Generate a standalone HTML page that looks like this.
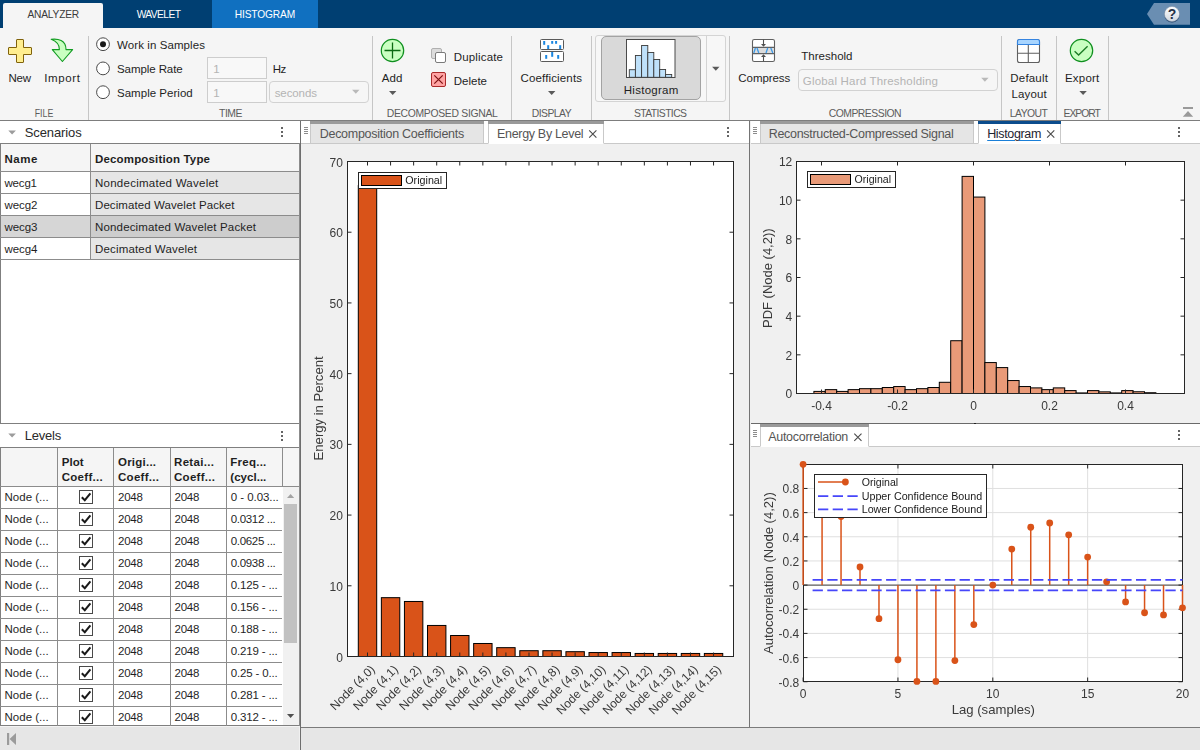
<!DOCTYPE html>
<html><head><meta charset="utf-8"><title>Wavelet Signal Analyzer</title><style>
html,body{margin:0;padding:0;}
body{width:1200px;height:750px;position:relative;overflow:hidden;background:#f0f0f0;font-family:"Liberation Sans",sans-serif;}
.t{position:absolute;line-height:1;white-space:nowrap;}
.a{position:absolute;box-sizing:border-box;}
svg{position:absolute;left:0;top:0;overflow:visible;}
svg text{font-family:"Liberation Sans",sans-serif;}
</style></head>
<body>
<div class="a" id="tabbar" style="left:0;top:0;width:1200px;height:28px;background:#003f72;"></div>
<div class="a" style="left:3px;top:3px;width:100px;height:26px;background:#f5f5f5;border-radius:2px 2px 0 0;"></div>
<div class="a" style="left:212px;top:0;width:106px;height:28px;background:#1070c0;"></div>
<span class="t" style="left:27.50px;top:10.00px;font-size:10.2px;color:#3a3a3a;letter-spacing:-0.199px;">ANALYZER</span>
<span class="t" style="left:136.70px;top:10.00px;font-size:10.2px;color:#ffffff;letter-spacing:-0.552px;">WAVELET</span>
<span class="t" style="left:234.70px;top:10.00px;font-size:10.2px;color:#ffffff;letter-spacing:-0.123px;">HISTOGRAM</span>
<svg width="1200" height="28" viewBox="0 0 1200 28"><path d="M1147 14 L1154 3 H1190 V24.8 H1154 Z" fill="#6a8eb2"/><defs><linearGradient id="hg" x1="0" y1="0" x2="0" y2="1"><stop offset="0" stop-color="#ffffff"/><stop offset="1" stop-color="#cfd6de"/></linearGradient></defs><circle cx="1172" cy="14.7" r="7.7" fill="#1f4068"/><circle cx="1172" cy="14" r="7.6" fill="url(#hg)" stroke="#8a9bb0" stroke-width="0.6"/><text x="1172" y="18.5" font-size="14" font-weight="bold" text-anchor="middle" fill="#273248">?</text></svg>
<div class="a" id="toolstrip" style="left:0;top:28px;width:1200px;height:92px;background:#f5f5f5;"></div>
<div class="a" style="left:0;top:120px;width:1200px;height:1px;background:#7d7d7d;"></div>
<div class="a" style="left:88px;top:36px;width:1px;height:84px;background:#c6c6c6;"></div>
<div class="a" style="left:372px;top:36px;width:1px;height:84px;background:#c6c6c6;"></div>
<div class="a" style="left:511px;top:36px;width:1px;height:84px;background:#c6c6c6;"></div>
<div class="a" style="left:591px;top:36px;width:1px;height:84px;background:#c6c6c6;"></div>
<div class="a" style="left:729px;top:36px;width:1px;height:84px;background:#c6c6c6;"></div>
<div class="a" style="left:1001px;top:36px;width:1px;height:84px;background:#c6c6c6;"></div>
<div class="a" style="left:1056px;top:36px;width:1px;height:84px;background:#c6c6c6;"></div>
<div class="a" style="left:1108px;top:36px;width:1px;height:84px;background:#c6c6c6;"></div>
<span class="t" style="left:219.00px;top:109.00px;font-size:10.4px;color:#5c5c5c;letter-spacing:-0.448px;">TIME</span>
<span class="t" style="left:386.70px;top:109.00px;font-size:10.4px;color:#5c5c5c;letter-spacing:-0.304px;">DECOMPOSED SIGNAL</span>
<span class="t" style="left:531.70px;top:109.00px;font-size:10.4px;color:#5c5c5c;letter-spacing:-0.527px;">DISPLAY</span>
<span class="t" style="left:634.00px;top:109.00px;font-size:10.4px;color:#5c5c5c;letter-spacing:-0.617px;">STATISTICS</span>
<span class="t" style="left:828.70px;top:109.00px;font-size:10.4px;color:#5c5c5c;letter-spacing:-0.501px;">COMPRESSION</span>
<span class="t" style="left:1009.80px;top:109.00px;font-size:10.4px;color:#5c5c5c;letter-spacing:-0.548px;">LAYOUT</span>
<span class="t" style="left:1063.50px;top:109.00px;font-size:10.4px;color:#5c5c5c;letter-spacing:-1.055px;">EXPORT</span>
<div class="a" style="left:595px;top:34.5px;width:131px;height:67.5px;border:1px solid #d4d4d4;border-radius:3px;background:#f7f7f7;"></div>
<div class="a" style="left:706px;top:35px;width:1px;height:66px;background:#d4d4d4;"></div>
<div class="a" style="left:601px;top:36.3px;width:100px;height:63.5px;border:1px solid #a3a3a3;border-radius:5px;background:#d9d9d9;"></div>
<span class="t" style="left:8.50px;top:73.00px;font-size:11.5px;color:#1f1f1f;letter-spacing:-0.253px;">New</span>
<span class="t" style="left:44.20px;top:73.00px;font-size:11.5px;color:#1f1f1f;letter-spacing:0.642px;">Import</span>
<span class="t" style="left:117.00px;top:40.00px;font-size:11.5px;color:#1f1f1f;letter-spacing:0.092px;">Work in Samples</span>
<span class="t" style="left:117.00px;top:64.00px;font-size:11.5px;color:#1f1f1f;letter-spacing:-0.078px;">Sample Rate</span>
<span class="t" style="left:117.00px;top:88.00px;font-size:11.5px;color:#1f1f1f;letter-spacing:0.022px;">Sample Period</span>
<span class="t" style="left:272.80px;top:64.00px;font-size:11.5px;color:#1f1f1f;letter-spacing:-0.555px;">Hz</span>
<span class="t" style="left:381.70px;top:73.00px;font-size:11.5px;color:#1f1f1f;letter-spacing:0.169px;">Add</span>
<span class="t" style="left:453.80px;top:52.00px;font-size:11.5px;color:#1f1f1f;letter-spacing:0.157px;">Duplicate</span>
<span class="t" style="left:453.80px;top:76.00px;font-size:11.5px;color:#1f1f1f;letter-spacing:-0.009px;">Delete</span>
<span class="t" style="left:520.50px;top:73.00px;font-size:11.5px;color:#1f1f1f;letter-spacing:0.148px;">Coefficients</span>
<span class="t" style="left:623.80px;top:85.00px;font-size:11.5px;color:#1f1f1f;letter-spacing:0.262px;">Histogram</span>
<span class="t" style="left:738.30px;top:73.00px;font-size:11.5px;color:#1f1f1f;letter-spacing:-0.058px;">Compress</span>
<span class="t" style="left:801.30px;top:51.00px;font-size:11.5px;color:#1f1f1f;letter-spacing:0.008px;">Threshold</span>
<span class="t" style="left:1010.30px;top:73.00px;font-size:11.5px;color:#1f1f1f;letter-spacing:0.194px;">Default</span>
<span class="t" style="left:1011.50px;top:89.00px;font-size:11.5px;color:#1f1f1f;letter-spacing:0.134px;">Layout</span>
<span class="t" style="left:1065.00px;top:73.00px;font-size:11.5px;color:#1f1f1f;letter-spacing:0.192px;">Export</span>
<div class="a" style="left:207px;top:57px;width:60px;height:21.5px;border:1px solid #cdcdcd;background:#f8f8f8;"></div>
<div class="a" style="left:207px;top:81px;width:60px;height:21.5px;border:1px solid #cdcdcd;background:#f8f8f8;"></div>
<span class="t" style="left:213.30px;top:64.00px;font-size:11.5px;color:#b4b4b4;">1</span>
<span class="t" style="left:213.30px;top:88.00px;font-size:11.5px;color:#b4b4b4;">1</span>
<div class="a" style="left:269px;top:81px;width:100px;height:21.5px;border:1px solid #d2d2d2;border-radius:4px;background:#f6f6f6;"></div>
<span class="t" style="left:274.70px;top:88.00px;font-size:11.5px;color:#b4b4b4;letter-spacing:-0.089px;">seconds</span>
<div class="a" style="left:798px;top:69px;width:200px;height:21.5px;border:1px solid #d2d2d2;border-radius:4px;background:#f6f6f6;"></div>
<span class="t" style="left:802.80px;top:76.00px;font-size:11.5px;color:#b4b4b4;letter-spacing:0.190px;">Global Hard Thresholding</span>
<svg width="1200" height="121" viewBox="0 0 1200 121"><defs><linearGradient id="gy" x1="0" y1="0" x2="0" y2="1"><stop offset="0" stop-color="#fdf29c"/><stop offset="1" stop-color="#f4d951"/></linearGradient><linearGradient id="gg" x1="0" y1="0" x2="0" y2="1"><stop offset="0" stop-color="#d9fbc8"/><stop offset="1" stop-color="#a9ec92"/></linearGradient></defs><circle cx="103" cy="44.2" r="6.4" fill="#ffffff" stroke="#4a4a4a" stroke-width="1"/><circle cx="103" cy="44.2" r="3" fill="#1a1a1a"/><circle cx="103" cy="68.4" r="6.4" fill="#ffffff" stroke="#4a4a4a" stroke-width="1"/><circle cx="103" cy="92.2" r="6.4" fill="#ffffff" stroke="#4a4a4a" stroke-width="1"/><path d="M17 39.5 H23 Q23.5 39.5 23.5 40 V47.5 H31 Q31.5 47.5 31.5 48 V54 Q31.5 54.5 31 54.5 H23.5 V62 Q23.5 62.5 23 62.5 H17 Q16.5 62.5 16.5 62 V54.5 H9 Q8.5 54.5 8.5 54 V48 Q8.5 47.5 9 47.5 H16.5 V40 Q16.5 39.5 17 39.5 Z" fill="#ffee8f" stroke="#80620c" stroke-width="1"/><path d="M51.2 39.3 C58 38.4 66 40.2 66 49.6 H72.6 L62.4 61.5 L52.3 49.6 H59.4 C59.6 45.2 57 41.6 51.2 39.3 Z" fill="#c9ffc1" stroke="#119c21" stroke-width="1.1" stroke-linejoin="round"/><circle cx="392.5" cy="50.5" r="11.2" fill="#c9ffc1" stroke="#0f8f1f" stroke-width="1.2"/><path d="M392.5 42.5 V58.5 M384.5 50.5 H400.5" stroke="#0b6a12" stroke-width="1.3" fill="none"/><path d="M389.0 91.0 H396.4 L392.7 95.0 Z" fill="#5a5a5a"/><path d="M548.0 91.0 H555.4000000000001 L551.7 95.0 Z" fill="#5a5a5a"/><path d="M1079.3999999999999 91.0 H1086.8 L1083.1 95.0 Z" fill="#5a5a5a"/><path d="M712.0999999999999 66.8 H719.5 L715.8 70.8 Z" fill="#5a5a5a"/><path d="M352.1 89.8 H359.5 L355.8 93.8 Z" fill="#b9b9b9"/><path d="M981.1999999999999 77.8 H988.6 L984.9 81.8 Z" fill="#b9b9b9"/><rect x="431.5" y="48.5" width="10" height="10" rx="1.5" fill="#dcdcdc" stroke="#b0b0b0" stroke-width="1"/><rect x="435.5" y="52.5" width="10" height="10" rx="1.5" fill="#ffffff" stroke="#7a7a7a" stroke-width="1"/><rect x="431.5" y="72.5" width="14" height="14" rx="1.5" fill="#ffa3a3" stroke="#a82a2a" stroke-width="1"/><path d="M434.3 75.3 L442.7 83.7 M442.7 75.3 L434.3 83.7" stroke="#7c1010" stroke-width="1.2" fill="none"/><rect x="540.5" y="39.5" width="23" height="10" rx="1" fill="#ffffff" stroke="#5a5a5a" stroke-width="1"/><rect x="540.5" y="51.5" width="23" height="10" rx="1" fill="#ffffff" stroke="#5a5a5a" stroke-width="1"/><rect x="543.2" y="41" width="2" height="3.8" fill="#1a86e0"/><rect x="547.2" y="45.2" width="2" height="3.8" fill="#1a86e0"/><rect x="551.2" y="41" width="2" height="2.8" fill="#1a86e0"/><rect x="555.1" y="41" width="2" height="2.8" fill="#1a86e0"/><rect x="559.2" y="45.2" width="2" height="3.8" fill="#1a86e0"/><rect x="545.2" y="55" width="2" height="3.8" fill="#1a86e0"/><rect x="551.2" y="52" width="2" height="4.8" fill="#1a86e0"/><rect x="557.2" y="55" width="2" height="3.8" fill="#1a86e0"/><rect x="626.5" y="39.5" width="48.5" height="38" fill="#ffffff" stroke="#4a4a4a" stroke-width="1"/><rect x="629.3" y="69.7" width="6.10" height="7.60" fill="#bfe1fa" stroke="#3a3a3a" stroke-width="0.9"/><rect x="635.4" y="55.5" width="6.20" height="21.80" fill="#bfe1fa" stroke="#3a3a3a" stroke-width="0.9"/><rect x="641.6" y="45.5" width="6.20" height="31.80" fill="#bfe1fa" stroke="#3a3a3a" stroke-width="0.9"/><rect x="647.8" y="52.5" width="6.00" height="24.80" fill="#bfe1fa" stroke="#3a3a3a" stroke-width="0.9"/><rect x="653.8" y="59.5" width="5.90" height="17.80" fill="#bfe1fa" stroke="#3a3a3a" stroke-width="0.9"/><rect x="659.7" y="69.5" width="5.90" height="7.80" fill="#bfe1fa" stroke="#3a3a3a" stroke-width="0.9"/><rect x="665.6" y="74.5" width="6.10" height="2.80" fill="#bfe1fa" stroke="#3a3a3a" stroke-width="0.9"/><rect x="752.5" y="39.5" width="22" height="22" rx="1.8" fill="#ffffff" stroke="#606060" stroke-width="1.1"/><rect x="753" y="47.5" width="21" height="6" fill="#dcdcdc"/><path d="M752.5 47.4 H774.5 M752.5 53.6 H774.5" stroke="#606060" stroke-width="1.1" fill="none"/><path d="M753.8 53 L755.4 48 M757 48 L758.8 53 M766 53 L767.7 48 M770.8 48 L772.8 53" stroke="#3d9be9" stroke-width="1.3" fill="none"/><path d="M763.5 39.5 V45 M763.5 61.5 V56" stroke="#505050" stroke-width="1.1" fill="none"/><path d="M761 44 H766 L763.5 46.8 Z M761 57 H766 L763.5 54.2 Z" fill="#505050"/><rect x="1017.5" y="39.5" width="22" height="23" rx="2" fill="#ffffff" stroke="#606060" stroke-width="1.1"/><path d="M1017.5 44.5 V41.5 Q1017.5 39.5 1019.5 39.5 H1037.5 Q1039.5 39.5 1039.5 41.5 V44.5 Z" fill="#a8d5ff" stroke="#3584e0" stroke-width="1.1"/><path d="M1018 53.3 H1039 M1028.3 45 V62.5" stroke="#606060" stroke-width="1.1" fill="none"/><circle cx="1081.5" cy="50.5" r="11.2" fill="#c9ffc1" stroke="#0f8f1f" stroke-width="1.2"/><path d="M1074.6 51.2 L1078.6 55 L1087.6 46.2" stroke="#1d7d26" stroke-width="1.4" fill="none"/><text x="34.7" y="117" font-size="10.4" textLength="18.6" lengthAdjust="spacingAndGlyphs" fill="#5c5c5c">FILE</text><path d="M1183 107 H1193 V109 H1183 Z M1188 111 L1193.2 116.8 H1182.8 Z" fill="#9a9a9a"/></svg>
<div class="a" id="left" style="left:0;top:121px;width:300px;height:605px;background:#ffffff;"></div>
<svg width="300" height="750" viewBox="0 0 300 750"><path d="M8.3 130.6 H15.9 L12.1 134.4 Z M8.3 433.6 H15.9 L12.1 437.4 Z" fill="#9c9c9c"/></svg>
<span class="t" style="left:24.70px;top:126.00px;font-size:13px;color:#2a2a2a;letter-spacing:-0.101px;">Scenarios</span>
<div class="a" style="left:281px;top:127.0px;width:2px;height:2px;background:#646464;"></div><div class="a" style="left:281px;top:131.0px;width:2px;height:2px;background:#646464;"></div><div class="a" style="left:281px;top:135.0px;width:2px;height:2px;background:#646464;"></div>
<div class="a" style="left:0;top:143px;width:300px;height:281px;border:1px solid #7f7f7f;border-right:none;"></div>
<div class="a" style="left:1px;top:144px;width:298px;height:27px;background:#f5f5f5;"></div>
<div class="a" style="left:1px;top:171.5px;width:90px;height:22px;background:#ffffff;"></div>
<div class="a" style="left:91px;top:171.5px;width:208px;height:22px;background:#e6e6e6;"></div>
<span class="t" style="left:4.50px;top:178.00px;font-size:11.5px;color:#1f1f1f;letter-spacing:-0.186px;">wecg1</span>
<span class="t" style="left:95.00px;top:178.00px;font-size:11.5px;color:#1f1f1f;letter-spacing:0.254px;">Nondecimated Wavelet</span>
<div class="a" style="left:1px;top:193.5px;width:90px;height:22px;background:#ffffff;"></div>
<div class="a" style="left:91px;top:193.5px;width:208px;height:22px;background:#e6e6e6;"></div>
<span class="t" style="left:4.50px;top:200.00px;font-size:11.5px;color:#1f1f1f;letter-spacing:-0.061px;">wecg2</span>
<span class="t" style="left:95.00px;top:200.00px;font-size:11.5px;color:#1f1f1f;letter-spacing:0.081px;">Decimated Wavelet Packet</span>
<div class="a" style="left:1px;top:215.5px;width:90px;height:22px;background:#d6d6d6;"></div>
<div class="a" style="left:91px;top:215.5px;width:208px;height:22px;background:#cdcdcd;"></div>
<span class="t" style="left:4.50px;top:222.00px;font-size:11.5px;color:#1f1f1f;letter-spacing:-0.061px;">wecg3</span>
<span class="t" style="left:95.00px;top:222.00px;font-size:11.5px;color:#1f1f1f;letter-spacing:0.161px;">Nondecimated Wavelet Packet</span>
<div class="a" style="left:1px;top:237.5px;width:90px;height:22px;background:#ffffff;"></div>
<div class="a" style="left:91px;top:237.5px;width:208px;height:22px;background:#e6e6e6;"></div>
<span class="t" style="left:4.50px;top:244.00px;font-size:11.5px;color:#1f1f1f;letter-spacing:-0.061px;">wecg4</span>
<span class="t" style="left:95.00px;top:244.00px;font-size:11.5px;color:#1f1f1f;letter-spacing:0.170px;">Decimated Wavelet</span>
<div class="a" style="left:0;top:171.0px;width:299px;height:1px;background:#8c8c8c;"></div>
<div class="a" style="left:0;top:193.0px;width:299px;height:1px;background:#8c8c8c;"></div>
<div class="a" style="left:0;top:215.0px;width:299px;height:1px;background:#8c8c8c;"></div>
<div class="a" style="left:0;top:237.0px;width:299px;height:1px;background:#8c8c8c;"></div>
<div class="a" style="left:0;top:259.0px;width:299px;height:1px;background:#8c8c8c;"></div>
<div class="a" style="left:90px;top:144px;width:1px;height:116px;background:#8c8c8c;"></div>
<span class="t" style="left:4.50px;top:154.00px;font-size:11.5px;color:#1f1f1f;font-weight:bold;letter-spacing:0.559px;">Name</span>
<span class="t" style="left:95.00px;top:154.00px;font-size:11.5px;color:#1f1f1f;font-weight:bold;letter-spacing:0.162px;">Decomposition Type</span>
<span class="t" style="left:24.70px;top:429.00px;font-size:13px;color:#2a2a2a;letter-spacing:-0.196px;">Levels</span>
<div class="a" style="left:281px;top:431.0px;width:2px;height:2px;background:#646464;"></div><div class="a" style="left:281px;top:435.0px;width:2px;height:2px;background:#646464;"></div><div class="a" style="left:281px;top:439.0px;width:2px;height:2px;background:#646464;"></div>
<div class="a" style="left:0;top:446.5px;width:300px;height:279.5px;border:1px solid #7f7f7f;border-right:none;overflow:hidden;"></div>
<div class="a" style="left:1px;top:447.5px;width:298px;height:39px;background:#f5f5f5;"></div>
<div class="a" style="left:0;top:486px;width:300px;height:239px;overflow:hidden;">
<span class="t" style="left:4.50px;top:6.00px;font-size:11.5px;color:#1f1f1f;letter-spacing:0.012px;">Node (...</span>
<span class="t" style="left:118.00px;top:6.00px;font-size:11.5px;color:#1f1f1f;letter-spacing:-0.261px;">2048</span>
<span class="t" style="left:174.50px;top:6.00px;font-size:11.5px;color:#1f1f1f;letter-spacing:-0.261px;">2048</span>
<span class="t" style="left:230.80px;top:6.00px;font-size:11.5px;color:#1f1f1f;letter-spacing:-0.058px;">0 - 0.03...</span>
<div class="a" style="left:79px;top:4.0px;width:14px;height:14px;border:1px solid #4a4a4a;background:#fff;"></div>
<svg width="14" height="14" viewBox="0 0 14 14" style="left:79px;top:4.0px"><path d="M2.8 7.2 L5.8 10.2 L11.4 3.4" stroke="#1a1a1a" stroke-width="2" fill="none"/></svg>
<div class="a" style="left:0;top:22px;width:282px;height:1px;background:#8c8c8c;"></div>
<span class="t" style="left:4.50px;top:28.00px;font-size:11.5px;color:#1f1f1f;letter-spacing:0.012px;">Node (...</span>
<span class="t" style="left:118.00px;top:28.00px;font-size:11.5px;color:#1f1f1f;letter-spacing:-0.261px;">2048</span>
<span class="t" style="left:174.50px;top:28.00px;font-size:11.5px;color:#1f1f1f;letter-spacing:-0.261px;">2048</span>
<span class="t" style="left:230.80px;top:28.00px;font-size:11.5px;color:#1f1f1f;letter-spacing:-0.328px;">0.0312 ...</span>
<div class="a" style="left:79px;top:26.0px;width:14px;height:14px;border:1px solid #4a4a4a;background:#fff;"></div>
<svg width="14" height="14" viewBox="0 0 14 14" style="left:79px;top:26.0px"><path d="M2.8 7.2 L5.8 10.2 L11.4 3.4" stroke="#1a1a1a" stroke-width="2" fill="none"/></svg>
<div class="a" style="left:0;top:44px;width:282px;height:1px;background:#8c8c8c;"></div>
<span class="t" style="left:4.50px;top:50.00px;font-size:11.5px;color:#1f1f1f;letter-spacing:0.012px;">Node (...</span>
<span class="t" style="left:118.00px;top:50.00px;font-size:11.5px;color:#1f1f1f;letter-spacing:-0.261px;">2048</span>
<span class="t" style="left:174.50px;top:50.00px;font-size:11.5px;color:#1f1f1f;letter-spacing:-0.261px;">2048</span>
<span class="t" style="left:230.80px;top:50.00px;font-size:11.5px;color:#1f1f1f;letter-spacing:-0.328px;">0.0625 ...</span>
<div class="a" style="left:79px;top:48.0px;width:14px;height:14px;border:1px solid #4a4a4a;background:#fff;"></div>
<svg width="14" height="14" viewBox="0 0 14 14" style="left:79px;top:48.0px"><path d="M2.8 7.2 L5.8 10.2 L11.4 3.4" stroke="#1a1a1a" stroke-width="2" fill="none"/></svg>
<div class="a" style="left:0;top:66px;width:282px;height:1px;background:#8c8c8c;"></div>
<span class="t" style="left:4.50px;top:72.00px;font-size:11.5px;color:#1f1f1f;letter-spacing:0.012px;">Node (...</span>
<span class="t" style="left:118.00px;top:72.00px;font-size:11.5px;color:#1f1f1f;letter-spacing:-0.261px;">2048</span>
<span class="t" style="left:174.50px;top:72.00px;font-size:11.5px;color:#1f1f1f;letter-spacing:-0.261px;">2048</span>
<span class="t" style="left:230.80px;top:72.00px;font-size:11.5px;color:#1f1f1f;letter-spacing:-0.328px;">0.0938 ...</span>
<div class="a" style="left:79px;top:70.0px;width:14px;height:14px;border:1px solid #4a4a4a;background:#fff;"></div>
<svg width="14" height="14" viewBox="0 0 14 14" style="left:79px;top:70.0px"><path d="M2.8 7.2 L5.8 10.2 L11.4 3.4" stroke="#1a1a1a" stroke-width="2" fill="none"/></svg>
<div class="a" style="left:0;top:88px;width:282px;height:1px;background:#8c8c8c;"></div>
<span class="t" style="left:4.50px;top:94.00px;font-size:11.5px;color:#1f1f1f;letter-spacing:0.012px;">Node (...</span>
<span class="t" style="left:118.00px;top:94.00px;font-size:11.5px;color:#1f1f1f;letter-spacing:-0.261px;">2048</span>
<span class="t" style="left:174.50px;top:94.00px;font-size:11.5px;color:#1f1f1f;letter-spacing:-0.261px;">2048</span>
<span class="t" style="left:230.80px;top:94.00px;font-size:11.5px;color:#1f1f1f;letter-spacing:-0.158px;">0.125 - ...</span>
<div class="a" style="left:79px;top:92.0px;width:14px;height:14px;border:1px solid #4a4a4a;background:#fff;"></div>
<svg width="14" height="14" viewBox="0 0 14 14" style="left:79px;top:92.0px"><path d="M2.8 7.2 L5.8 10.2 L11.4 3.4" stroke="#1a1a1a" stroke-width="2" fill="none"/></svg>
<div class="a" style="left:0;top:110px;width:282px;height:1px;background:#8c8c8c;"></div>
<span class="t" style="left:4.50px;top:116.00px;font-size:11.5px;color:#1f1f1f;letter-spacing:0.012px;">Node (...</span>
<span class="t" style="left:118.00px;top:116.00px;font-size:11.5px;color:#1f1f1f;letter-spacing:-0.261px;">2048</span>
<span class="t" style="left:174.50px;top:116.00px;font-size:11.5px;color:#1f1f1f;letter-spacing:-0.261px;">2048</span>
<span class="t" style="left:230.80px;top:116.00px;font-size:11.5px;color:#1f1f1f;letter-spacing:-0.158px;">0.156 - ...</span>
<div class="a" style="left:79px;top:114.0px;width:14px;height:14px;border:1px solid #4a4a4a;background:#fff;"></div>
<svg width="14" height="14" viewBox="0 0 14 14" style="left:79px;top:114.0px"><path d="M2.8 7.2 L5.8 10.2 L11.4 3.4" stroke="#1a1a1a" stroke-width="2" fill="none"/></svg>
<div class="a" style="left:0;top:132px;width:282px;height:1px;background:#8c8c8c;"></div>
<span class="t" style="left:4.50px;top:138.00px;font-size:11.5px;color:#1f1f1f;letter-spacing:0.012px;">Node (...</span>
<span class="t" style="left:118.00px;top:138.00px;font-size:11.5px;color:#1f1f1f;letter-spacing:-0.261px;">2048</span>
<span class="t" style="left:174.50px;top:138.00px;font-size:11.5px;color:#1f1f1f;letter-spacing:-0.261px;">2048</span>
<span class="t" style="left:230.80px;top:138.00px;font-size:11.5px;color:#1f1f1f;letter-spacing:-0.158px;">0.188 - ...</span>
<div class="a" style="left:79px;top:136.0px;width:14px;height:14px;border:1px solid #4a4a4a;background:#fff;"></div>
<svg width="14" height="14" viewBox="0 0 14 14" style="left:79px;top:136.0px"><path d="M2.8 7.2 L5.8 10.2 L11.4 3.4" stroke="#1a1a1a" stroke-width="2" fill="none"/></svg>
<div class="a" style="left:0;top:154px;width:282px;height:1px;background:#8c8c8c;"></div>
<span class="t" style="left:4.50px;top:160.00px;font-size:11.5px;color:#1f1f1f;letter-spacing:0.012px;">Node (...</span>
<span class="t" style="left:118.00px;top:160.00px;font-size:11.5px;color:#1f1f1f;letter-spacing:-0.261px;">2048</span>
<span class="t" style="left:174.50px;top:160.00px;font-size:11.5px;color:#1f1f1f;letter-spacing:-0.261px;">2048</span>
<span class="t" style="left:230.80px;top:160.00px;font-size:11.5px;color:#1f1f1f;letter-spacing:-0.158px;">0.219 - ...</span>
<div class="a" style="left:79px;top:158.0px;width:14px;height:14px;border:1px solid #4a4a4a;background:#fff;"></div>
<svg width="14" height="14" viewBox="0 0 14 14" style="left:79px;top:158.0px"><path d="M2.8 7.2 L5.8 10.2 L11.4 3.4" stroke="#1a1a1a" stroke-width="2" fill="none"/></svg>
<div class="a" style="left:0;top:176px;width:282px;height:1px;background:#8c8c8c;"></div>
<span class="t" style="left:4.50px;top:182.00px;font-size:11.5px;color:#1f1f1f;letter-spacing:0.012px;">Node (...</span>
<span class="t" style="left:118.00px;top:182.00px;font-size:11.5px;color:#1f1f1f;letter-spacing:-0.261px;">2048</span>
<span class="t" style="left:174.50px;top:182.00px;font-size:11.5px;color:#1f1f1f;letter-spacing:-0.261px;">2048</span>
<span class="t" style="left:230.80px;top:182.00px;font-size:11.5px;color:#1f1f1f;letter-spacing:-0.158px;">0.25 - 0...</span>
<div class="a" style="left:79px;top:180.0px;width:14px;height:14px;border:1px solid #4a4a4a;background:#fff;"></div>
<svg width="14" height="14" viewBox="0 0 14 14" style="left:79px;top:180.0px"><path d="M2.8 7.2 L5.8 10.2 L11.4 3.4" stroke="#1a1a1a" stroke-width="2" fill="none"/></svg>
<div class="a" style="left:0;top:198px;width:282px;height:1px;background:#8c8c8c;"></div>
<span class="t" style="left:4.50px;top:204.00px;font-size:11.5px;color:#1f1f1f;letter-spacing:0.012px;">Node (...</span>
<span class="t" style="left:118.00px;top:204.00px;font-size:11.5px;color:#1f1f1f;letter-spacing:-0.261px;">2048</span>
<span class="t" style="left:174.50px;top:204.00px;font-size:11.5px;color:#1f1f1f;letter-spacing:-0.261px;">2048</span>
<span class="t" style="left:230.80px;top:204.00px;font-size:11.5px;color:#1f1f1f;letter-spacing:-0.158px;">0.281 - ...</span>
<div class="a" style="left:79px;top:202.0px;width:14px;height:14px;border:1px solid #4a4a4a;background:#fff;"></div>
<svg width="14" height="14" viewBox="0 0 14 14" style="left:79px;top:202.0px"><path d="M2.8 7.2 L5.8 10.2 L11.4 3.4" stroke="#1a1a1a" stroke-width="2" fill="none"/></svg>
<div class="a" style="left:0;top:220px;width:282px;height:1px;background:#8c8c8c;"></div>
<span class="t" style="left:4.50px;top:226.00px;font-size:11.5px;color:#1f1f1f;letter-spacing:0.012px;">Node (...</span>
<span class="t" style="left:118.00px;top:226.00px;font-size:11.5px;color:#1f1f1f;letter-spacing:-0.261px;">2048</span>
<span class="t" style="left:174.50px;top:226.00px;font-size:11.5px;color:#1f1f1f;letter-spacing:-0.261px;">2048</span>
<span class="t" style="left:230.80px;top:226.00px;font-size:11.5px;color:#1f1f1f;letter-spacing:-0.158px;">0.312 - ...</span>
<div class="a" style="left:79px;top:224.0px;width:14px;height:14px;border:1px solid #4a4a4a;background:#fff;"></div>
<svg width="14" height="14" viewBox="0 0 14 14" style="left:79px;top:224.0px"><path d="M2.8 7.2 L5.8 10.2 L11.4 3.4" stroke="#1a1a1a" stroke-width="2" fill="none"/></svg>
</div>
<div class="a" style="left:0;top:486px;width:299px;height:1px;background:#8c8c8c;"></div>
<div class="a" style="left:57px;top:447.5px;width:1px;height:278px;background:#8c8c8c;"></div>
<div class="a" style="left:113px;top:447.5px;width:1px;height:278px;background:#8c8c8c;"></div>
<div class="a" style="left:170px;top:447.5px;width:1px;height:278px;background:#8c8c8c;"></div>
<div class="a" style="left:226px;top:447.5px;width:1px;height:278px;background:#8c8c8c;"></div>
<div class="a" style="left:282px;top:447.5px;width:1px;height:39px;background:#8c8c8c;"></div>
<span class="t" style="left:61.70px;top:457.00px;font-size:11.5px;color:#1f1f1f;font-weight:bold;letter-spacing:0.093px;">Plot</span>
<span class="t" style="left:61.70px;top:472.00px;font-size:11.5px;color:#1f1f1f;font-weight:bold;letter-spacing:0.290px;">Coeff...</span>
<span class="t" style="left:118.00px;top:457.00px;font-size:11.5px;color:#1f1f1f;font-weight:bold;letter-spacing:0.226px;">Origi...</span>
<span class="t" style="left:118.00px;top:472.00px;font-size:11.5px;color:#1f1f1f;font-weight:bold;letter-spacing:0.290px;">Coeff...</span>
<span class="t" style="left:174.00px;top:457.00px;font-size:11.5px;color:#1f1f1f;font-weight:bold;letter-spacing:0.328px;">Retai...</span>
<span class="t" style="left:174.00px;top:472.00px;font-size:11.5px;color:#1f1f1f;font-weight:bold;letter-spacing:0.290px;">Coeff...</span>
<span class="t" style="left:230.30px;top:457.00px;font-size:11.5px;color:#1f1f1f;font-weight:bold;letter-spacing:0.249px;">Freq...</span>
<span class="t" style="left:230.30px;top:472.00px;font-size:11.5px;color:#1f1f1f;font-weight:bold;letter-spacing:0.029px;">(cycl...</span>
<div class="a" style="left:283px;top:487px;width:16px;height:238px;background:#f1f1f1;"></div>
<div class="a" style="left:284px;top:504px;width:13px;height:138.5px;background:#c1c1c1;"></div>
<svg width="300" height="750" viewBox="0 0 300 750"><path d="M287 498 L290.6 494 L294.2 498 Z" fill="#a3a3a3"/><path d="M287 714 H294.2 L290.6 718 Z" fill="#505050"/></svg>
<div class="a" style="left:299px;top:143px;width:1px;height:583px;background:#8c8c8c;"></div><div class="a" style="left:300px;top:121px;width:1px;height:629px;background:#6e6e6e;"></div>
<div class="a" style="left:0;top:727px;width:299px;height:23px;background:#e6e6e6;"></div>
<div class="a" style="left:0;top:726px;width:299px;height:1px;background:#f4f4f4;"></div>
<svg width="300" height="750" viewBox="0 0 300 750"><path d="M7 733 H9.2 V745 H7 Z M16 733 V745 L9.6 739 Z" fill="#9b9b9b"/></svg>
<div class="a" id="center" style="left:301px;top:121px;width:448px;height:606px;background:#f0f0f0;"></div>
<div class="a" style="left:301px;top:121px;width:448px;height:23px;background:#ffffff;border-bottom:1px solid #c9c9c9;"></div>
<div class="a" style="left:310px;top:121px;width:173.5px;height:23px;background:#e5e5e5;border-left:1px solid #c9c9c9;border-right:1px solid #c9c9c9;border-bottom:1px solid #c9c9c9;"></div>
<div class="a" style="left:310px;top:121px;width:173.5px;height:2.5px;background:#9a9a9a;"></div>
<span class="t" style="left:319.70px;top:128.00px;font-size:12.5px;color:#555555;letter-spacing:-0.269px;">Decomposition Coefficients</span>
<div class="a" style="left:488px;top:121px;width:116px;height:23px;background:#ffffff;border-left:1px solid #c9c9c9;border-right:1px solid #c9c9c9;border-bottom:1px solid #ffffff;"></div>
<div class="a" style="left:488px;top:121px;width:116px;height:2.5px;background:#9a9a9a;"></div>
<span class="t" style="left:497.00px;top:128.00px;font-size:12.5px;color:#555555;letter-spacing:-0.316px;">Energy By Level</span>
<svg width="1200" height="750" viewBox="0 0 1200 750"><path d="M589.1999999999999 130.4 L596.4 137.6 M596.4 130.4 L589.1999999999999 137.6" stroke="#4a4a4a" stroke-width="1.1" fill="none"/></svg>
<div class="a" style="left:727px;top:127.0px;width:2px;height:2px;background:#646464;"></div>
<div class="a" style="left:727px;top:131.0px;width:2px;height:2px;background:#646464;"></div>
<div class="a" style="left:727px;top:135.0px;width:2px;height:2px;background:#646464;"></div>
<div class="a" style="left:304px;top:127px;width:4px;height:1px;background:#8c8c8c;"></div>
<div class="a" style="left:304px;top:129px;width:4px;height:1px;background:#8c8c8c;"></div>
<div class="a" style="left:304px;top:131px;width:4px;height:1px;background:#8c8c8c;"></div>
<div class="a" style="left:304px;top:133px;width:4px;height:1px;background:#8c8c8c;"></div>
<div class="a" style="left:749px;top:121px;width:1px;height:606px;background:#747474;"></div>
<div class="a" style="left:301px;top:727px;width:899px;height:1px;background:#7b7b7b;"></div>
<div class="a" style="left:301px;top:728px;width:899px;height:22px;background:#e6e6e6;"></div>
<svg width="1200" height="750" viewBox="0 0 1200 750" style="will-change:transform"><rect x="347.5" y="161.5" width="386.0" height="495.0" fill="#ffffff"/><rect x="358.30" y="185.54" width="18.4" height="470.96" fill="#d95319" stroke="#000000" stroke-width="1"/><rect x="381.37" y="597.67" width="18.4" height="58.83" fill="#d95319" stroke="#000000" stroke-width="1"/><rect x="404.44" y="601.48" width="18.4" height="55.02" fill="#d95319" stroke="#000000" stroke-width="1"/><rect x="427.51" y="625.46" width="18.4" height="31.04" fill="#d95319" stroke="#000000" stroke-width="1"/><rect x="450.58" y="635.50" width="18.4" height="21.00" fill="#d95319" stroke="#000000" stroke-width="1"/><rect x="473.65" y="643.49" width="18.4" height="13.01" fill="#d95319" stroke="#000000" stroke-width="1"/><rect x="496.72" y="647.66" width="18.4" height="8.84" fill="#d95319" stroke="#000000" stroke-width="1"/><rect x="519.79" y="650.70" width="18.4" height="5.80" fill="#d95319" stroke="#000000" stroke-width="1"/><rect x="542.86" y="650.70" width="18.4" height="5.80" fill="#d95319" stroke="#000000" stroke-width="1"/><rect x="565.93" y="651.69" width="18.4" height="4.81" fill="#d95319" stroke="#000000" stroke-width="1"/><rect x="589.00" y="652.54" width="18.4" height="3.96" fill="#d95319" stroke="#000000" stroke-width="1"/><rect x="612.07" y="652.54" width="18.4" height="3.96" fill="#d95319" stroke="#000000" stroke-width="1"/><rect x="635.14" y="653.46" width="18.4" height="3.04" fill="#d95319" stroke="#000000" stroke-width="1"/><rect x="658.21" y="653.46" width="18.4" height="3.04" fill="#d95319" stroke="#000000" stroke-width="1"/><rect x="681.28" y="653.46" width="18.4" height="3.04" fill="#d95319" stroke="#000000" stroke-width="1"/><rect x="704.35" y="653.46" width="18.4" height="3.04" fill="#d95319" stroke="#000000" stroke-width="1"/><rect x="347.5" y="161.5" width="386.0" height="495.0" fill="none" stroke="#262626" stroke-width="1"/><path d="M367.50 656.5 v-4 M367.50 161.5 v4 M390.57 656.5 v-4 M390.57 161.5 v4 M413.64 656.5 v-4 M413.64 161.5 v4 M436.71 656.5 v-4 M436.71 161.5 v4 M459.78 656.5 v-4 M459.78 161.5 v4 M482.85 656.5 v-4 M482.85 161.5 v4 M505.92 656.5 v-4 M505.92 161.5 v4 M528.99 656.5 v-4 M528.99 161.5 v4 M552.06 656.5 v-4 M552.06 161.5 v4 M575.13 656.5 v-4 M575.13 161.5 v4 M598.20 656.5 v-4 M598.20 161.5 v4 M621.27 656.5 v-4 M621.27 161.5 v4 M644.34 656.5 v-4 M644.34 161.5 v4 M667.41 656.5 v-4 M667.41 161.5 v4 M690.48 656.5 v-4 M690.48 161.5 v4 M713.55 656.5 v-4 M713.55 161.5 v4 M347.5 656.50 h4 M733.5 656.50 h-4 M347.5 585.79 h4 M733.5 585.79 h-4 M347.5 515.07 h4 M733.5 515.07 h-4 M347.5 444.36 h4 M733.5 444.36 h-4 M347.5 373.64 h4 M733.5 373.64 h-4 M347.5 302.93 h4 M733.5 302.93 h-4 M347.5 232.21 h4 M733.5 232.21 h-4 M347.5 161.50 h4 M733.5 161.50 h-4" stroke="#262626" stroke-width="1" fill="none"/><text x="342.90" y="661.50" font-size="12" fill="#3a3a3a" text-anchor="end" >0</text><text x="342.90" y="590.79" font-size="12" fill="#3a3a3a" text-anchor="end" >10</text><text x="342.90" y="520.07" font-size="12" fill="#3a3a3a" text-anchor="end" >20</text><text x="342.90" y="449.36" font-size="12" fill="#3a3a3a" text-anchor="end" >30</text><text x="342.90" y="378.64" font-size="12" fill="#3a3a3a" text-anchor="end" >40</text><text x="342.90" y="307.93" font-size="12" fill="#3a3a3a" text-anchor="end" >50</text><text x="342.90" y="237.21" font-size="12" fill="#3a3a3a" text-anchor="end" >60</text><text x="342.90" y="166.50" font-size="12" fill="#3a3a3a" text-anchor="end" >70</text><text transform="translate(375.70 670.10) rotate(-45)" font-size="12" fill="#3a3a3a" text-anchor="end" textLength="57.7" lengthAdjust="spacingAndGlyphs">Node (4,0)</text><text transform="translate(398.77 670.10) rotate(-45)" font-size="12" fill="#3a3a3a" text-anchor="end" textLength="57.7" lengthAdjust="spacingAndGlyphs">Node (4,1)</text><text transform="translate(421.84 670.10) rotate(-45)" font-size="12" fill="#3a3a3a" text-anchor="end" textLength="57.7" lengthAdjust="spacingAndGlyphs">Node (4,2)</text><text transform="translate(444.91 670.10) rotate(-45)" font-size="12" fill="#3a3a3a" text-anchor="end" textLength="57.7" lengthAdjust="spacingAndGlyphs">Node (4,3)</text><text transform="translate(467.98 670.10) rotate(-45)" font-size="12" fill="#3a3a3a" text-anchor="end" textLength="57.7" lengthAdjust="spacingAndGlyphs">Node (4,4)</text><text transform="translate(491.05 670.10) rotate(-45)" font-size="12" fill="#3a3a3a" text-anchor="end" textLength="57.7" lengthAdjust="spacingAndGlyphs">Node (4,5)</text><text transform="translate(514.12 670.10) rotate(-45)" font-size="12" fill="#3a3a3a" text-anchor="end" textLength="57.7" lengthAdjust="spacingAndGlyphs">Node (4,6)</text><text transform="translate(537.19 670.10) rotate(-45)" font-size="12" fill="#3a3a3a" text-anchor="end" textLength="57.7" lengthAdjust="spacingAndGlyphs">Node (4,7)</text><text transform="translate(560.26 670.10) rotate(-45)" font-size="12" fill="#3a3a3a" text-anchor="end" textLength="57.7" lengthAdjust="spacingAndGlyphs">Node (4,8)</text><text transform="translate(583.33 670.10) rotate(-45)" font-size="12" fill="#3a3a3a" text-anchor="end" textLength="57.7" lengthAdjust="spacingAndGlyphs">Node (4,9)</text><text transform="translate(606.40 670.10) rotate(-45)" font-size="12" fill="#3a3a3a" text-anchor="end" textLength="63.8" lengthAdjust="spacingAndGlyphs">Node (4,10)</text><text transform="translate(629.47 670.10) rotate(-45)" font-size="12" fill="#3a3a3a" text-anchor="end" textLength="63.8" lengthAdjust="spacingAndGlyphs">Node (4,11)</text><text transform="translate(652.54 670.10) rotate(-45)" font-size="12" fill="#3a3a3a" text-anchor="end" textLength="63.8" lengthAdjust="spacingAndGlyphs">Node (4,12)</text><text transform="translate(675.61 670.10) rotate(-45)" font-size="12" fill="#3a3a3a" text-anchor="end" textLength="63.8" lengthAdjust="spacingAndGlyphs">Node (4,13)</text><text transform="translate(698.68 670.10) rotate(-45)" font-size="12" fill="#3a3a3a" text-anchor="end" textLength="63.8" lengthAdjust="spacingAndGlyphs">Node (4,14)</text><text transform="translate(721.75 670.10) rotate(-45)" font-size="12" fill="#3a3a3a" text-anchor="end" textLength="63.8" lengthAdjust="spacingAndGlyphs">Node (4,15)</text><text transform="translate(322.8 408.4) rotate(-90)" font-size="13.33" fill="#3a3a3a" text-anchor="middle" textLength="104" lengthAdjust="spacingAndGlyphs">Energy in Percent</text><rect x="358.5" y="172.5" width="88" height="16" fill="#ffffff" stroke="#262626" stroke-width="1"/><rect x="361.5" y="175.5" width="40" height="10" fill="#d95319" stroke="#000" stroke-width="1"/><text x="405.30" y="184.30" font-size="10.67" fill="#1a1a1a" text-anchor="start" textLength="36.90" lengthAdjust="spacingAndGlyphs" >Original</text></svg>
<div class="a" id="right" style="left:750.5px;top:121px;width:449.5px;height:606px;background:#f0f0f0;"></div>
<div class="a" style="left:750.5px;top:121px;width:449.5px;height:23px;background:#ffffff;border-bottom:1px solid #c9c9c9;"></div>
<div class="a" style="left:759.5px;top:121px;width:214.0px;height:23px;background:#e5e5e5;border-left:1px solid #c9c9c9;border-right:1px solid #c9c9c9;border-bottom:1px solid #c9c9c9;"></div>
<div class="a" style="left:759.5px;top:121px;width:214.0px;height:2.5px;background:#9a9a9a;"></div>
<span class="t" style="left:768.70px;top:128.00px;font-size:12.5px;color:#555555;letter-spacing:-0.292px;">Reconstructed-Compressed Signal</span>
<div class="a" style="left:978px;top:121px;width:83px;height:23px;background:#ffffff;border-left:1px solid #c9c9c9;border-right:1px solid #c9c9c9;border-bottom:1px solid #ffffff;"></div>
<div class="a" style="left:978px;top:121px;width:83px;height:2.5px;background:#0b4c8c;"></div>
<span class="t" style="left:987.20px;top:128.00px;font-size:12.5px;color:#1e2430;letter-spacing:-0.357px;text-decoration:underline;text-decoration-color:#1a7fd8;text-decoration-thickness:1px;text-underline-offset:2px;">Histogram</span>
<svg width="1200" height="750" viewBox="0 0 1200 750"><path d="M1047.1000000000001 130.4 L1054.3 137.6 M1054.3 130.4 L1047.1000000000001 137.6" stroke="#4a4a4a" stroke-width="1.1" fill="none"/></svg>
<div class="a" style="left:1178px;top:127.0px;width:2px;height:2px;background:#646464;"></div>
<div class="a" style="left:1178px;top:131.0px;width:2px;height:2px;background:#646464;"></div>
<div class="a" style="left:1178px;top:135.0px;width:2px;height:2px;background:#646464;"></div>
<div class="a" style="left:753px;top:127px;width:4px;height:1px;background:#8c8c8c;"></div>
<div class="a" style="left:753px;top:129px;width:4px;height:1px;background:#8c8c8c;"></div>
<div class="a" style="left:753px;top:131px;width:4px;height:1px;background:#8c8c8c;"></div>
<div class="a" style="left:753px;top:133px;width:4px;height:1px;background:#8c8c8c;"></div>
<div class="a" style="left:750.5px;top:423px;width:449.5px;height:1.3px;background:#6a6a6a;"></div>
<div class="a" style="left:974px;top:423px;width:2px;height:2px;background:#222;"></div>
<div class="a" style="left:750.5px;top:424.3px;width:449.5px;height:23px;background:#ffffff;border-bottom:1px solid #c9c9c9;"></div>
<div class="a" style="left:759.5px;top:424.3px;width:109.20000000000005px;height:23px;background:#ffffff;border-left:1px solid #c9c9c9;border-right:1px solid #c9c9c9;border-bottom:1px solid #ffffff;"></div>
<div class="a" style="left:759.5px;top:424.3px;width:109.20000000000005px;height:2.5px;background:#9a9a9a;"></div>
<span class="t" style="left:768.20px;top:431.00px;font-size:12.5px;color:#555555;letter-spacing:-0.284px;">Autocorrelation</span>
<svg width="1200" height="750" viewBox="0 0 1200 750"><path d="M854.3 433.7 L861.5 440.90000000000003 M861.5 433.7 L854.3 440.90000000000003" stroke="#4a4a4a" stroke-width="1.1" fill="none"/></svg>
<div class="a" style="left:1178px;top:430.3px;width:2px;height:2px;background:#646464;"></div>
<div class="a" style="left:1178px;top:434.3px;width:2px;height:2px;background:#646464;"></div>
<div class="a" style="left:1178px;top:438.3px;width:2px;height:2px;background:#646464;"></div>
<div class="a" style="left:753px;top:430.3px;width:4px;height:1px;background:#8c8c8c;"></div>
<div class="a" style="left:753px;top:432.3px;width:4px;height:1px;background:#8c8c8c;"></div>
<div class="a" style="left:753px;top:434.3px;width:4px;height:1px;background:#8c8c8c;"></div>
<div class="a" style="left:753px;top:436.3px;width:4px;height:1px;background:#8c8c8c;"></div>
<svg width="1200" height="750" viewBox="0 0 1200 750" style="will-change:transform"><rect x="796.5" y="161.5" width="388.0" height="232.0" fill="#ffffff"/><rect x="813.90" y="391.41" width="11.4" height="2.09" fill="#e99a78" stroke="#000000" stroke-width="1"/><rect x="825.30" y="389.63" width="11.4" height="3.87" fill="#e99a78" stroke="#000000" stroke-width="1"/><rect x="836.70" y="391.41" width="11.4" height="2.09" fill="#e99a78" stroke="#000000" stroke-width="1"/><rect x="848.10" y="389.63" width="11.4" height="3.87" fill="#e99a78" stroke="#000000" stroke-width="1"/><rect x="859.50" y="388.67" width="11.4" height="4.83" fill="#e99a78" stroke="#000000" stroke-width="1"/><rect x="870.90" y="388.67" width="11.4" height="4.83" fill="#e99a78" stroke="#000000" stroke-width="1"/><rect x="882.30" y="387.51" width="11.4" height="5.99" fill="#e99a78" stroke="#000000" stroke-width="1"/><rect x="893.70" y="386.54" width="11.4" height="6.96" fill="#e99a78" stroke="#000000" stroke-width="1"/><rect x="905.10" y="389.63" width="11.4" height="3.87" fill="#e99a78" stroke="#000000" stroke-width="1"/><rect x="916.50" y="388.67" width="11.4" height="4.83" fill="#e99a78" stroke="#000000" stroke-width="1"/><rect x="927.90" y="387.51" width="11.4" height="5.99" fill="#e99a78" stroke="#000000" stroke-width="1"/><rect x="939.30" y="382.29" width="11.4" height="11.21" fill="#e99a78" stroke="#000000" stroke-width="1"/><rect x="950.70" y="340.72" width="11.4" height="52.78" fill="#e99a78" stroke="#000000" stroke-width="1"/><rect x="962.10" y="176.39" width="11.4" height="217.11" fill="#e99a78" stroke="#000000" stroke-width="1"/><rect x="973.50" y="197.07" width="11.4" height="196.43" fill="#e99a78" stroke="#000000" stroke-width="1"/><rect x="984.90" y="362.57" width="11.4" height="30.93" fill="#e99a78" stroke="#000000" stroke-width="1"/><rect x="996.30" y="367.59" width="11.4" height="25.91" fill="#e99a78" stroke="#000000" stroke-width="1"/><rect x="1007.70" y="380.55" width="11.4" height="12.95" fill="#e99a78" stroke="#000000" stroke-width="1"/><rect x="1019.10" y="386.54" width="11.4" height="6.96" fill="#e99a78" stroke="#000000" stroke-width="1"/><rect x="1030.50" y="387.89" width="11.4" height="5.61" fill="#e99a78" stroke="#000000" stroke-width="1"/><rect x="1041.90" y="389.63" width="11.4" height="3.87" fill="#e99a78" stroke="#000000" stroke-width="1"/><rect x="1053.30" y="387.89" width="11.4" height="5.61" fill="#e99a78" stroke="#000000" stroke-width="1"/><rect x="1064.70" y="390.60" width="11.4" height="2.90" fill="#e99a78" stroke="#000000" stroke-width="1"/><rect x="1076.10" y="392.92" width="11.4" height="0.58" fill="#e99a78" stroke="#000000" stroke-width="1"/><rect x="1087.50" y="390.60" width="11.4" height="2.90" fill="#e99a78" stroke="#000000" stroke-width="1"/><rect x="1098.90" y="391.86" width="11.4" height="1.64" fill="#e99a78" stroke="#000000" stroke-width="1"/><rect x="1110.30" y="392.92" width="11.4" height="0.58" fill="#e99a78" stroke="#000000" stroke-width="1"/><rect x="1121.70" y="390.60" width="11.4" height="2.90" fill="#e99a78" stroke="#000000" stroke-width="1"/><rect x="1133.10" y="391.76" width="11.4" height="1.74" fill="#e99a78" stroke="#000000" stroke-width="1"/><rect x="1144.50" y="392.73" width="11.4" height="0.77" fill="#e99a78" stroke="#000000" stroke-width="1"/><rect x="796.5" y="161.5" width="388.0" height="232.0" fill="none" stroke="#262626" stroke-width="1"/><text x="821.50" y="410.00" font-size="12" fill="#3a3a3a" text-anchor="middle" >-0.4</text><text x="897.50" y="410.00" font-size="12" fill="#3a3a3a" text-anchor="middle" >-0.2</text><text x="973.50" y="410.00" font-size="12" fill="#3a3a3a" text-anchor="middle" >0</text><text x="1049.50" y="410.00" font-size="12" fill="#3a3a3a" text-anchor="middle" >0.2</text><text x="1125.50" y="410.00" font-size="12" fill="#3a3a3a" text-anchor="middle" >0.4</text><text x="792.30" y="398.20" font-size="12" fill="#3a3a3a" text-anchor="end" >0</text><text x="792.30" y="359.53" font-size="12" fill="#3a3a3a" text-anchor="end" >2</text><text x="792.30" y="320.87" font-size="12" fill="#3a3a3a" text-anchor="end" >4</text><text x="792.30" y="282.20" font-size="12" fill="#3a3a3a" text-anchor="end" >6</text><text x="792.30" y="243.53" font-size="12" fill="#3a3a3a" text-anchor="end" >8</text><text x="792.30" y="204.87" font-size="12" fill="#3a3a3a" text-anchor="end" >10</text><text x="792.30" y="166.20" font-size="12" fill="#3a3a3a" text-anchor="end" >12</text><path d="M821.50 393.5 v-4 M821.50 161.5 v4 M897.50 393.5 v-4 M897.50 161.5 v4 M973.50 393.5 v-4 M973.50 161.5 v4 M1049.50 393.5 v-4 M1049.50 161.5 v4 M1125.50 393.5 v-4 M1125.50 161.5 v4 M796.5 393.50 h4 M1184.5 393.50 h-4 M796.5 354.83 h4 M1184.5 354.83 h-4 M796.5 316.17 h4 M1184.5 316.17 h-4 M796.5 277.50 h4 M1184.5 277.50 h-4 M796.5 238.83 h4 M1184.5 238.83 h-4 M796.5 200.17 h4 M1184.5 200.17 h-4 M796.5 161.50 h4 M1184.5 161.50 h-4" stroke="#262626" stroke-width="1" fill="none"/><text transform="translate(772.3 278.2) rotate(-90)" font-size="13.33" fill="#3a3a3a" text-anchor="middle" textLength="99.6" lengthAdjust="spacingAndGlyphs">PDF (Node (4,2))</text><rect x="807.5" y="171.5" width="88" height="16" fill="#ffffff" stroke="#262626" stroke-width="1"/><rect x="810.5" y="174.5" width="40" height="10" fill="#e99a78" stroke="#000" stroke-width="1"/><text x="854.60" y="183.30" font-size="10.67" fill="#1a1a1a" text-anchor="start" textLength="36.50" lengthAdjust="spacingAndGlyphs" >Original</text><rect x="803.5" y="464.5" width="379.0" height="217.0" fill="#ffffff"/><path d="M897.95 464.5 V681.5 M992.80 464.5 V681.5 M1087.65 464.5 V681.5 M803.5 657.58 H1182.5 M803.5 633.42 H1182.5 M803.5 609.26 H1182.5 M803.5 560.94 H1182.5 M803.5 536.78 H1182.5 M803.5 512.62 H1182.5 M803.5 488.46 H1182.5" stroke="#dfdfdf" stroke-width="1" fill="none"/><path d="M803.5 585.1 H1182.5" stroke="#5a5a5a" stroke-width="1.2" fill="none"/><rect x="803.5" y="464.5" width="379.0" height="217.0" fill="none" stroke="#262626" stroke-width="1"/><text x="803.10" y="697.70" font-size="12" fill="#3a3a3a" text-anchor="middle" >0</text><text x="897.95" y="697.70" font-size="12" fill="#3a3a3a" text-anchor="middle" >5</text><text x="992.80" y="697.70" font-size="12" fill="#3a3a3a" text-anchor="middle" >10</text><text x="1087.65" y="697.70" font-size="12" fill="#3a3a3a" text-anchor="middle" >15</text><text x="1182.50" y="697.70" font-size="12" fill="#3a3a3a" text-anchor="middle" >20</text><text x="799.30" y="686.74" font-size="12" fill="#3a3a3a" text-anchor="end" >-0.8</text><text x="799.30" y="662.58" font-size="12" fill="#3a3a3a" text-anchor="end" >-0.6</text><text x="799.30" y="638.42" font-size="12" fill="#3a3a3a" text-anchor="end" >-0.4</text><text x="799.30" y="614.26" font-size="12" fill="#3a3a3a" text-anchor="end" >-0.2</text><text x="799.30" y="590.10" font-size="12" fill="#3a3a3a" text-anchor="end" >0</text><text x="799.30" y="565.94" font-size="12" fill="#3a3a3a" text-anchor="end" >0.2</text><text x="799.30" y="541.78" font-size="12" fill="#3a3a3a" text-anchor="end" >0.4</text><text x="799.30" y="517.62" font-size="12" fill="#3a3a3a" text-anchor="end" >0.6</text><text x="799.30" y="493.46" font-size="12" fill="#3a3a3a" text-anchor="end" >0.8</text><path d="M803.10 681.5 v-4 M803.10 464.5 v4 M897.95 681.5 v-4 M897.95 464.5 v4 M992.80 681.5 v-4 M992.80 464.5 v4 M1087.65 681.5 v-4 M1087.65 464.5 v4 M1182.50 681.5 v-4 M1182.50 464.5 v4 M803.5 681.74 h4 M1182.5 681.74 h-4 M803.5 657.58 h4 M1182.5 657.58 h-4 M803.5 633.42 h4 M1182.5 633.42 h-4 M803.5 609.26 h4 M1182.5 609.26 h-4 M803.5 585.10 h4 M1182.5 585.10 h-4 M803.5 560.94 h4 M1182.5 560.94 h-4 M803.5 536.78 h4 M1182.5 536.78 h-4 M803.5 512.62 h4 M1182.5 512.62 h-4 M803.5 488.46 h4 M1182.5 488.46 h-4" stroke="#262626" stroke-width="1" fill="none"/><text x="951.70" y="714.00" font-size="13.33" fill="#3a3a3a" text-anchor="start" textLength="83.20" lengthAdjust="spacingAndGlyphs" >Lag (samples)</text><text transform="translate(773.4 573.1) rotate(-90)" font-size="13.33" fill="#3a3a3a" text-anchor="middle" textLength="161.7" lengthAdjust="spacingAndGlyphs">Autocorrelation (Node (4,2))</text><path d="M803.10 585.1 V464.30 M822.07 585.1 V481.21 M841.04 585.1 V516.61 M860.01 585.1 V566.98 M878.98 585.1 V618.68 M897.95 585.1 V659.75 M916.92 585.1 V681.38 M935.89 585.1 V681.38 M954.86 585.1 V660.60 M973.83 585.1 V624.60 M992.80 585.1 V585.10 M1011.77 585.1 V549.10 M1030.74 585.1 V527.24 M1049.71 585.1 V523.01 M1068.68 585.1 V534.85 M1087.65 585.1 V557.07 M1106.62 585.1 V581.84 M1125.59 585.1 V601.89 M1144.56 585.1 V612.76 M1163.53 585.1 V614.94 M1182.50 585.1 V607.81" stroke="#d95319" stroke-width="1.5" fill="none"/><g fill="#d95319"><circle cx="803.10" cy="464.30" r="3.4"/><circle cx="822.07" cy="481.21" r="3.4"/><circle cx="841.04" cy="516.61" r="3.4"/><circle cx="860.01" cy="566.98" r="3.4"/><circle cx="878.98" cy="618.68" r="3.4"/><circle cx="897.95" cy="659.75" r="3.4"/><circle cx="916.92" cy="681.38" r="3.4"/><circle cx="935.89" cy="681.38" r="3.4"/><circle cx="954.86" cy="660.60" r="3.4"/><circle cx="973.83" cy="624.60" r="3.4"/><circle cx="992.80" cy="585.10" r="3.4"/><circle cx="1011.77" cy="549.10" r="3.4"/><circle cx="1030.74" cy="527.24" r="3.4"/><circle cx="1049.71" cy="523.01" r="3.4"/><circle cx="1068.68" cy="534.85" r="3.4"/><circle cx="1087.65" cy="557.07" r="3.4"/><circle cx="1106.62" cy="581.84" r="3.4"/><circle cx="1125.59" cy="601.89" r="3.4"/><circle cx="1144.56" cy="612.76" r="3.4"/><circle cx="1163.53" cy="614.94" r="3.4"/><circle cx="1182.50" cy="607.81" r="3.4"/></g><path d="M812.59 579.91 H1182.5" stroke="#4646fa" stroke-width="1.8" stroke-dasharray="10.3 4.4" fill="none"/><path d="M812.59 590.29 H1182.5" stroke="#4646fa" stroke-width="1.8" stroke-dasharray="10.3 4.4" fill="none"/><rect x="814.5" y="474.5" width="172" height="43" fill="#ffffff" stroke="#262626" stroke-width="1"/><path d="M818 482 H845.4" stroke="#d95319" stroke-width="1.5"/><circle cx="845.4" cy="482" r="3.4" fill="#d95319"/><path d="M818 496.2 H858 M818 509.3 H858" stroke="#4646fa" stroke-width="1.8" stroke-dasharray="10.3 4.4" fill="none"/><text x="861.70" y="485.80" font-size="10.67" fill="#1a1a1a" text-anchor="start" textLength="36.50" lengthAdjust="spacingAndGlyphs" >Original</text><text x="861.70" y="499.90" font-size="10.67" fill="#1a1a1a" text-anchor="start" textLength="120.50" lengthAdjust="spacingAndGlyphs" >Upper Confidence Bound</text><text x="861.70" y="513.00" font-size="10.67" fill="#1a1a1a" text-anchor="start" textLength="120.50" lengthAdjust="spacingAndGlyphs" >Lower Confidence Bound</text></svg>
</body></html>
